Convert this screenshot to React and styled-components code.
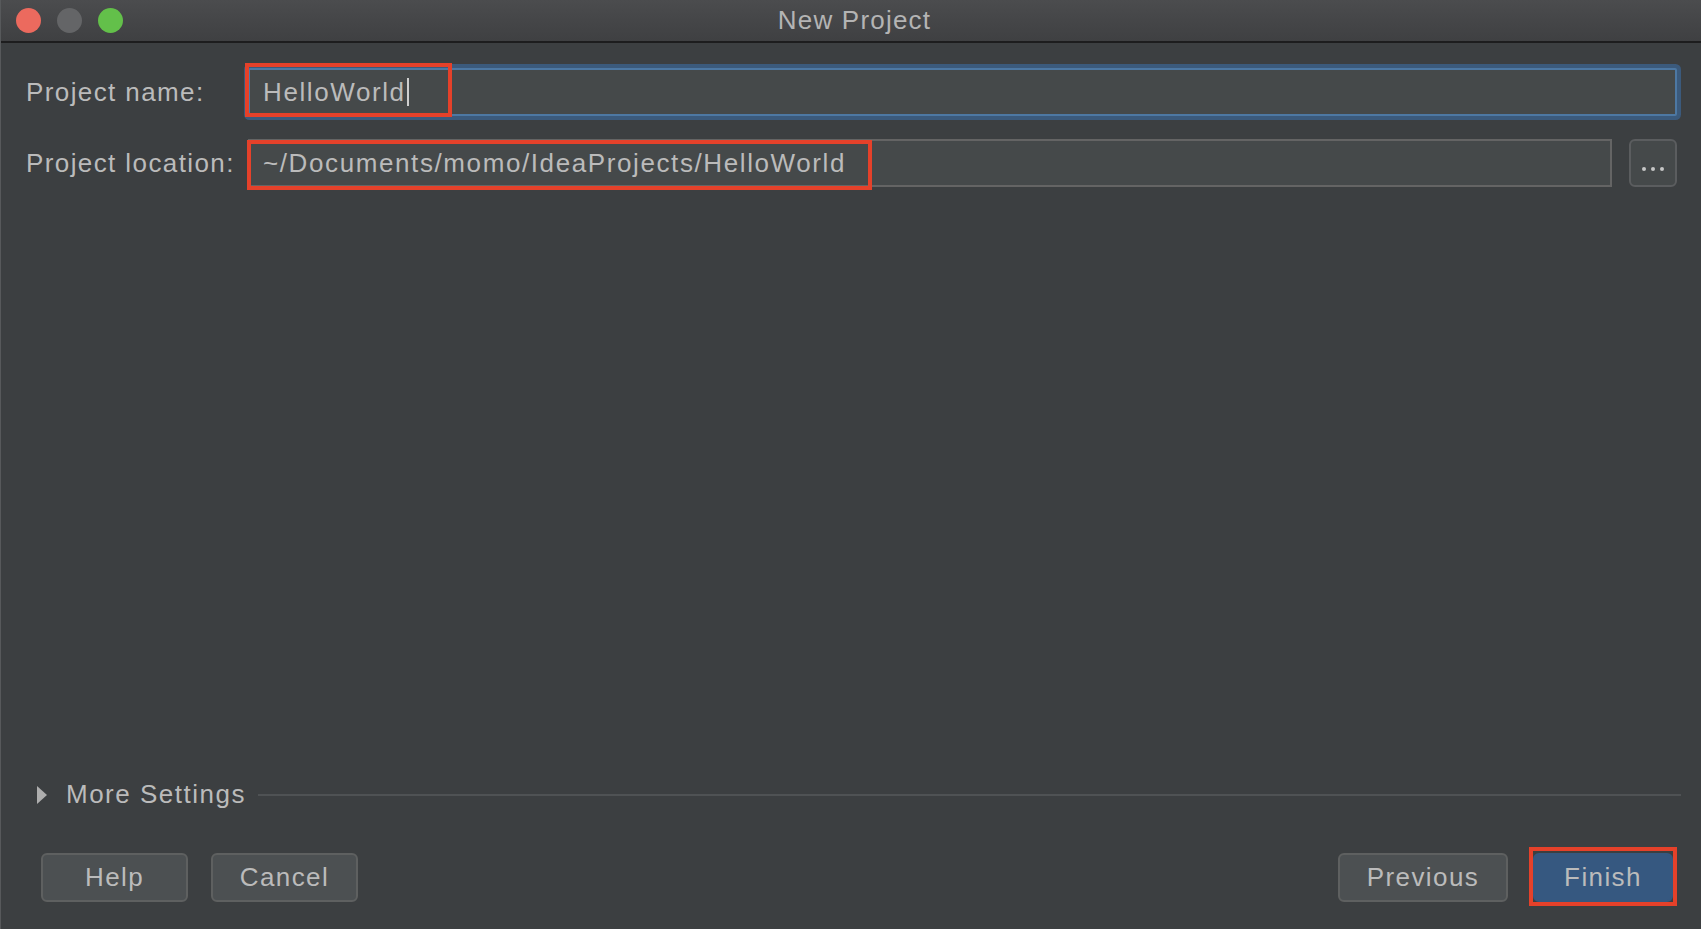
import styled, { createGlobalStyle } from "styled-components";

const Global = createGlobalStyle`
  html, body {
    margin: 0;
    padding: 0;
    background: #3c3f41;
    overflow: hidden;
  }
  * {
    box-sizing: border-box;
  }
`;

const Window = styled.div`
  width: 1701px;
  height: 929px;
  display: flex;
  flex-direction: column;
  background: #3c3f41;
  border-left: 1px solid #57595b;
  font-family: "Liberation Sans", Arial, sans-serif;
  color: #bbbbbb;
`;

const TitleBar = styled.div`
  height: 43px;
  flex-shrink: 0;
  display: flex;
  align-items: center;
  background: linear-gradient(#4b4c4e, #3f4042);
  border-bottom: 2px solid #1d1d1e;
`;

const Lights = styled.div`
  display: flex;
  gap: 16px;
  padding-left: 15px;
`;

const Light = styled.span`
  width: 25px;
  height: 25px;
  border-radius: 50%;
  background: ${(p) => p.color};
`;

const Title = styled.div`
  flex: 1;
  text-align: center;
  margin-left: -115px;
  font-size: 26px;
  letter-spacing: 1.2px;
  color: #b4b4b4;
`;

const Body = styled.div`
  flex: 1;
  display: flex;
  flex-direction: column;
  padding: 25px 24px 27px 25px;
`;

const Form = styled.div`
  display: grid;
  grid-template-columns: 222px 1fr;
  row-gap: 23px;
  align-items: center;
`;

const Label = styled.div`
  font-size: 26px;
  letter-spacing: 1.4px;
  color: #bbbbbb;
`;

const FieldRow = styled.div`
  display: flex;
  gap: 17px;
  align-items: center;
`;

const Field = styled.div`
  position: relative;
  flex: 1;
  height: 48px;
  display: flex;
  align-items: center;
  padding-left: 13px;
  background: #45494a;
  border: 2px solid ${(p) => (p.focused ? "#4d78a3" : "#646464")};
  box-shadow: ${(p) => (p.focused ? "0 0 0 4px #3b5a7c" : "none")};
  border-radius: ${(p) => (p.focused ? "2px" : "0")};
  font-size: 26px;
  letter-spacing: 1.6px;
  color: #bbbbbb;
`;

const Caret = styled.span`
  display: inline-block;
  width: 2px;
  height: 28px;
  margin-left: 1px;
  background: #cfcfcf;
`;

const Highlight = styled.span`
  position: absolute;
  left: ${(p) => p.left}px;
  top: ${(p) => p.top}px;
  width: ${(p) => p.width}px;
  height: ${(p) => p.height}px;
  border: 4px solid #e5412a;
  pointer-events: none;
`;

const BrowseButton = styled.button`
  width: 48px;
  height: 48px;
  display: flex;
  align-items: center;
  justify-content: center;
  gap: 5px;
  padding: 12px 0 0 0;
  background: #45494a;
  border: 2px solid #5b5d5f;
  border-radius: 6px;
`;

const Dot = styled.span`
  width: 4px;
  height: 4px;
  border-radius: 50%;
  background: #c6c6c6;
`;

const Spacer = styled.div`
  flex: 1;
`;

const MoreSettings = styled.div`
  display: flex;
  align-items: center;
  padding-left: 11px;
  margin-bottom: 43px;
`;

const Triangle = styled.span`
  width: 0;
  height: 0;
  border-top: 9px solid transparent;
  border-bottom: 9px solid transparent;
  border-left: 10px solid #aeaeae;
  margin-right: 19px;
`;

const MoreText = styled.span`
  font-size: 26px;
  letter-spacing: 1.5px;
  color: #bbbbbb;
`;

const Rule = styled.div`
  flex: 1;
  height: 2px;
  margin-left: 12px;
  margin-right: -4px;
  background: #4f5254;
`;

const Buttons = styled.div`
  display: flex;
  align-items: center;
  gap: 23px;
  padding-left: 15px;
  padding-right: 4px;
`;

const Button = styled.button`
  position: relative;
  width: ${(p) => p.width}px;
  height: 49px;
  margin-left: ${(p) => p.shift || 0}px;
  font-family: "Liberation Sans", Arial, sans-serif;
  font-size: 26px;
  letter-spacing: 1.4px;
  color: #bbbbbb;
  background: ${(p) => (p.primary ? "#365880" : "#4c5052")};
  border: 2px solid ${(p) => (p.primary ? "#365880" : "#5e6060")};
  border-radius: 6px;
  padding: 0;
  ${(p) =>
    p.marked &&
    `
    &::after {
      content: "";
      position: absolute;
      left: -6px;
      right: -6px;
      top: -8px;
      bottom: -6px;
      border: 4px solid #e5412a;
    }
  `}
`;

const Grow = styled.div`
  flex: 1;
`;

export default function App() {
  return (
    <Window>
      <Global />
      <TitleBar>
        <Lights>
          <Light color="#ec6a5e" />
          <Light color="#646567" />
          <Light color="#63c04a" />
        </Lights>
        <Title>New Project</Title>
      </TitleBar>
      <Body>
        <Form>
          <Label>Project name:</Label>
          <Field focused>
            HelloWorld
            <Caret />
            <Highlight left={-5} top={-7} width={207} height={54} />
          </Field>
          <Label>Project location:</Label>
          <FieldRow>
            <Field>
              ~/Documents/momo/IdeaProjects/HelloWorld
              <Highlight left={-3} top={-1} width={625} height={50} />
            </Field>
            <BrowseButton>
              <Dot />
              <Dot />
              <Dot />
            </BrowseButton>
          </FieldRow>
        </Form>
        <Spacer />
        <MoreSettings>
          <Triangle />
          <MoreText>More Settings</MoreText>
          <Rule />
        </MoreSettings>
        <Buttons>
          <Button width={147}>Help</Button>
          <Button width={147}>Cancel</Button>
          <Grow />
          <Button width={170}>Previous</Button>
          <Button width={140} shift={2} primary marked>
            Finish
          </Button>
        </Buttons>
      </Body>
    </Window>
  );
}
